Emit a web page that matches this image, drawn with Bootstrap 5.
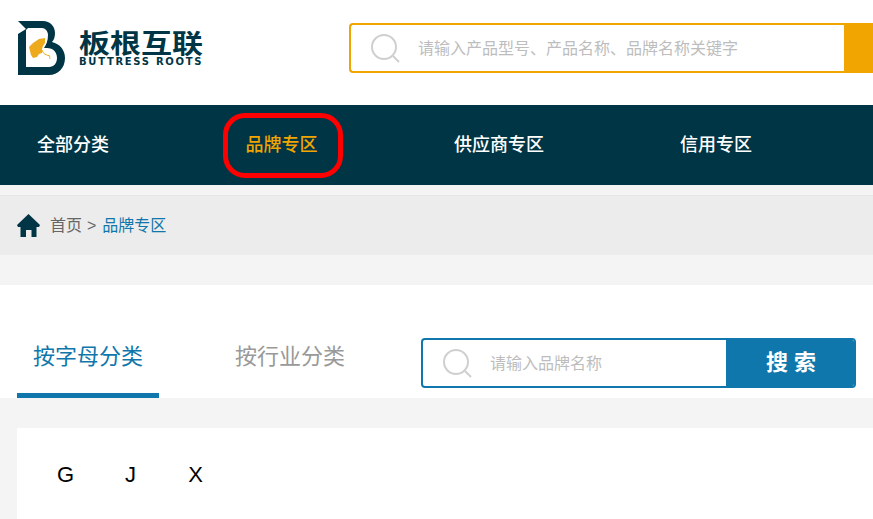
<!DOCTYPE html>
<html lang="zh">
<head>
    <meta charset="UTF-8">
    <title>品牌专区</title>
    <link href="https://cdn.jsdelivr.net/npm/bootstrap@5.3.0/dist/css/bootstrap.min.css" rel="stylesheet">
    <style>
        body { background: #f4f4f4; font-family: "Liberation Sans", "Noto Sans CJK SC", sans-serif; overflow-x: hidden; }
        a { text-decoration: none; }
        .top-head { height: 105px; padding: 21px 0 0 18px; background: #fff; }
        .logo-name { width: 124px; margin: 9px 0 0 14px; color: #003545; line-height: 1; }
        .logo-cn { font-size: 31px; font-weight: 700; height: 27px; line-height: 27px; white-space: nowrap; transform: scaleY(.86); }
        .logo-en { font-family: "DejaVu Sans", sans-serif; font-size: 10px; font-weight: 700; letter-spacing: 1.7px; white-space: nowrap; }
        .top-search { height: 50px; margin: 2px 0 0 146px; flex: 1 1 auto; border: 2px solid #f0a500; border-right: 0; border-radius: 4px 0 0 4px; background: #fff; overflow: hidden; }
        .top-search .search-hint { margin-left: 18px; }
        .top-search .search-ic { margin-left: 20px; }
        .top-search .go-btn { width: 29px; margin-left: auto; background: #f0a500; }
        .search-hint { padding-top: 1px; font-size: 16px; color: #bdbdbd; white-space: nowrap; }
        .main-nav { height: 80px; padding-left: 37px; background: #003545; font-size: 18px; font-weight: 500; }
        .main-nav a { color: #fff; white-space: nowrap; }
        .main-nav a.brand-on { width: 120px; height: 65px; margin: 0 111px 0 114px; padding-right: 3px; border: 5px solid #f00; border-radius: 22px; color: #f0a500; }
        .main-nav a.next-on { margin-right: 136px; }
        .crumb-bar { height: 60px; margin-top: 10px; padding-left: 17px; background: #ececec; border-top: 1px solid #e6e6e6; font-size: 16px; color: #666; }
        .crumb-bar svg { margin-right: 10px; }
        .crumb-bar .sep { margin: 0 6px 0 5px; }
        .crumb-bar a { color: #0f77ab; }
        .tab-row { height: 113px; margin-top: 30px; padding-left: 17px; background: #fff; }
        .tab-item { width: 142px; height: 113px; padding-top: 56px; font-size: 22px; line-height: 32px; color: #999; text-align: center; border-bottom: 5px solid transparent; }
        .tab-item.on { color: #0f77ab; border-bottom-color: #0f77ab; }
        .tab-item + .tab-item { margin-left: 60px; }
        .brand-search { width: 435px; height: 50px; margin: 53px 17px 0 auto; border: 2px solid #0f77ab; border-radius: 4px; background: #fff; overflow: hidden; }
        .brand-search .search-ic { margin-left: 20px; }
        .brand-search .search-hint { margin-left: 18px; }
        .brand-search .go-btn { width: 130px; height: 50px; margin: -2px -2px -2px auto; border: 0; background: #0f77ab; color: #fff; font-size: 22px; font-weight: 700; line-height: 1; }
        .letter-box { height: 91px; margin: 30px 0 0 17px; padding: 31px 0 0 16px; background: #fff; }
        .letter-box a { width: 65px; font-size: 22px; line-height: 32px; color: #000; text-align: center; }
    </style>
</head>
<body>
    <div class="top-head d-flex">
        <svg width="47" height="54" viewBox="0 0 47 54" class="flex-shrink-0">
            <path fill="#003545" fill-rule="evenodd" d="M0 0H25C32 0 37 5 37 12C37 16 36 19 34 21C42 23 47 29 47 37C47 47 40 54 31 54H0V13L8 8ZM10 7L8 9V46H31C36 46 39 42 39 37C39 31 35 27 29 27H26C28 24 30 20 30 14C30 10 27 7 24 7Z"/>
            <path fill="#edaa1d" d="M11 26L15 22L21 18L27 17L27 22L25 25L24 28L24 32L21 33L19 36L15 37L13 34L12 30Z"/>
            <path fill="none" stroke="#edaa1d" stroke-width="1" d="M24 29C25 33 28 34 32 35C31 36 32 37 32 38"/>
        </svg>
        <div class="logo-name">
            <div class="logo-cn">板根互联</div>
            <div class="logo-en">BUTTRESS ROOTS</div>
        </div>
        <div class="top-search d-flex align-items-center">
            <svg class="search-ic" width="29" height="29" viewBox="0 0 29 29"><circle cx="13" cy="13" r="12" fill="none" stroke="#cfcfcf" stroke-width="2"/><path d="M22 22L28 28" stroke="#cfcfcf" stroke-width="2"/></svg>
            <span class="search-hint">请输入产品型号、产品名称、品牌名称关键字</span>
            <div class="go-btn align-self-stretch"></div>
        </div>
    </div>

    <nav class="main-nav d-flex align-items-center">
        <a href="#">全部分类</a>
        <a href="#" class="brand-on d-flex align-items-center justify-content-center">品牌专区</a>
        <a href="#" class="next-on">供应商专区</a>
        <a href="#">信用专区</a>
    </nav>

    <div class="crumb-bar d-flex align-items-center">
        <svg width="23" height="23" viewBox="0 0 23 23"><path fill="#003545" d="M11.5 0L23 11L22 13H19.5V23H14.5V16H9V23H3.5V13H1L0 11Z"/></svg>
        <span>首页</span><span class="sep">&gt;</span><a href="#">品牌专区</a>
    </div>

    <div class="tab-row d-flex align-items-start">
        <a href="#" class="tab-item on">按字母分类</a>
        <a href="#" class="tab-item">按行业分类</a>
        <div class="brand-search d-flex align-items-center">
            <svg class="search-ic" width="29" height="29" viewBox="0 0 29 29"><circle cx="13" cy="13" r="12" fill="none" stroke="#cfcfcf" stroke-width="2"/><path d="M22 22L28 28" stroke="#cfcfcf" stroke-width="2"/></svg>
            <span class="search-hint">请输入品牌名称</span>
            <button class="go-btn">搜 索</button>
        </div>
    </div>

    <div class="letter-box d-flex align-items-start">
        <a href="#">G</a>
        <a href="#">J</a>
        <a href="#">X</a>
    </div>
    <script src="https://cdn.jsdelivr.net/npm/bootstrap@5.3.0/dist/js/bootstrap.bundle.min.js"></script>
</body>
</html>
